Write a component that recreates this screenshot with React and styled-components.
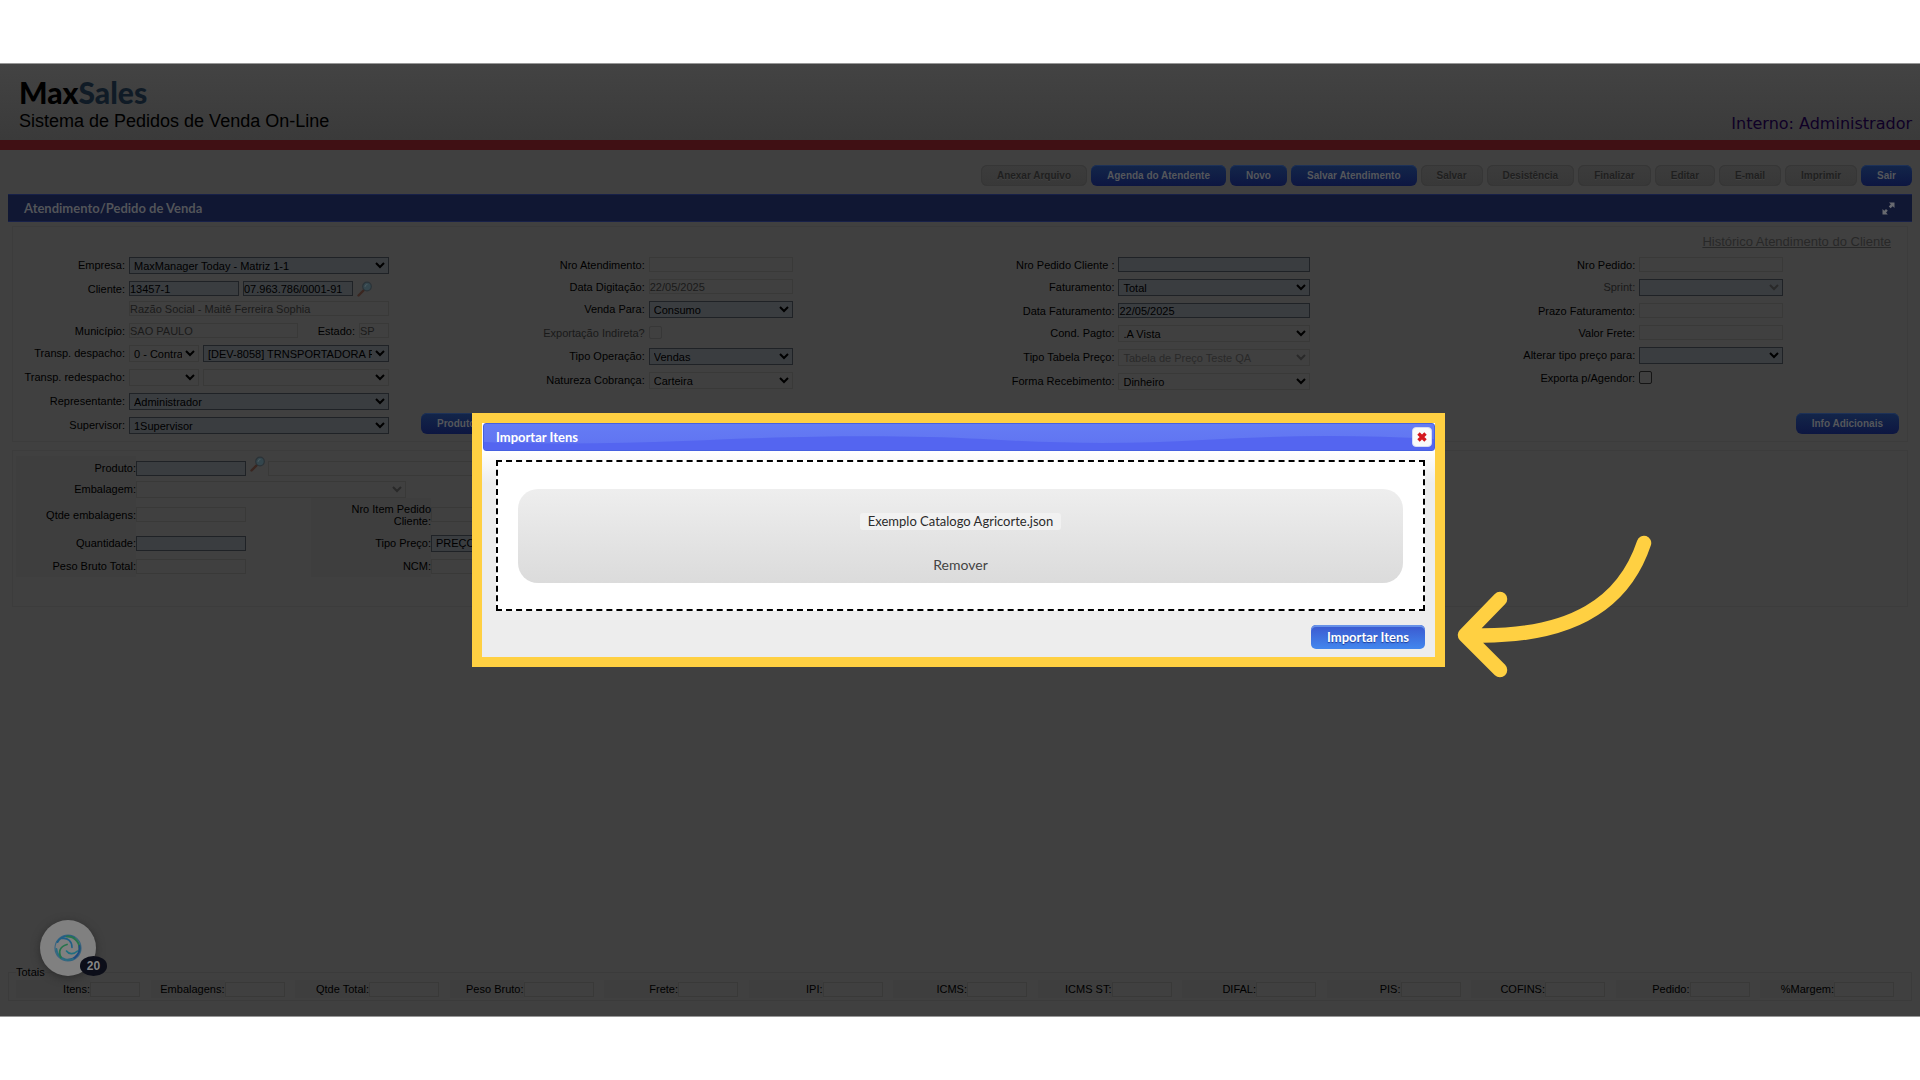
import React, { useId } from "react";
import styled, { createGlobalStyle, css } from "styled-components";

const ui = '"Liberation Sans", Arial, sans-serif';
const humanist = 'Lato, "Open Sans", sans-serif';

const GlobalStyle = createGlobalStyle`
  *, *::before, *::after { box-sizing: border-box; }
  body { margin: 0; background: #fff; font-family: ${ui}; font-size: 11px; color: #000; }
  button, input, select { font-family: inherit; margin: 0; }
`;

const Page = styled.div`
  min-height: 100vh;
  padding: 63px 0;
  display: flex;
  flex-direction: column;
`;

const Stage = styled.div`
  position: relative;
  flex: 1;
  display: flex;
  flex-direction: column;
  background: #404040;
  border: solid #979797;
  border-width: 1px 0;
`;

const Header = styled.header`
  display: flex;
  justify-content: space-between;
  align-items: flex-end;
  height: 86px;
  padding: 0 8px 7px 19px;
  background: linear-gradient(#434343, #3a3a3a);
  border-bottom: 10px solid #401014;
`;

const Brand = styled.h1`
  margin: 0;
  font: 900 30px/34px ${humanist};
  color: #000;
`;

const BrandAccent = styled.span`
  color: #101b26;
`;

const Tagline = styled.p`
  margin: 0;
  font-size: 18px;
  line-height: 24px;
`;

const User = styled.p`
  margin: 0;
  font: 16px/18px "DejaVu Sans", Verdana, sans-serif;
  color: #0f0026;
`;

const Toolbar = styled.nav`
  display: flex;
  justify-content: flex-end;
  gap: 4px;
  padding: 15px 8px 8px;
`;

const Button = styled.button`
  height: 21px;
  padding: 0 16px;
  border: 0;
  border-radius: 6px;
  font-size: 10px;
  font-weight: bold;
  white-space: nowrap;
  color: #55575b;
  background: linear-gradient(#13264a, #0d1641);
  box-shadow: inset 0 1px 0 #1d3157;
  &:disabled {
    color: #1f1f1f;
    background: linear-gradient(#3c3c3c, #383838);
    box-shadow: inset 0 0 0 1px #363636;
    text-shadow: 0 1px 0 #434343;
  }
`;

const TitleBar = styled.div`
  display: flex;
  justify-content: space-between;
  align-items: center;
  height: 28px;
  margin: 0 8px 4px;
  padding: 0 17px 0 16px;
  background: #101733;
  border: solid #172048;
  border-width: 1px 0;
  color: #525459;
`;

const Title = styled.h2`
  margin: 0;
  font: bold 13px/20px ${humanist};
`;

const Panel = styled.section`
  margin: 0 12px 8px;
  border: 1px solid #3c3c3c;
`;

const OrderPanel = styled(Panel)`
  height: 216px;
  display: flex;
  flex-direction: column;
`;

const HistoryLink = styled.a`
  align-self: flex-end;
  margin: 7px 16px;
  font-size: 13px;
  line-height: 16px;
  color: #282828;
`;

const Columns = styled.div`
  flex: 1;
  display: grid;
  grid-template-columns: 520fr 470fr 521fr 384fr;
`;

const Column = styled.div`
  min-width: 0;
`;

const Row = styled.div`
  display: flex;
  align-items: flex-start;
  gap: 4px;
  height: ${(p) => p.$step}px;
`;

const Label = styled.label`
  flex: none;
  display: flex;
  justify-content: flex-end;
  width: ${(p) => p.$width || 112}px;
  line-height: 16px;
  white-space: nowrap;
  color: ${(p) => (p.$muted ? "#191919" : "#000")};
`;

const look = css`
  flex: none;
  width: ${(p) => p.$width}px;
  font-size: 11px;
  border: 1px solid ${(p) => (p.$quiet ? "#393938" : "#1f2226")};
  border-radius: 0;
  background: ${(p) => (p.$quiet ? "#404040" : "#3a3d40")};
  color: #000;
  opacity: 1;
`;

const Input = styled.input`
  ${look}
  height: 15px;
  padding: 0;
  &:disabled { color: #1a1a1a; }
`;

const Select = styled.select`
  ${look}
  height: 17px;
  padding: 0;
  &:disabled { color: #292929; opacity: 1; }
`;

const Check = styled.input`
  appearance: none;
  width: 13px;
  height: 13px;
  margin: 1px 0;
  border: 1px solid ${(p) => (p.$quiet ? "#373737" : "#151515")};
  border-radius: 2px;
`;

const IconButton = styled.button`
  width: 16px;
  height: 16px;
  padding: 0;
  border: 0;
  background: none;
  svg { display: block; }
`;

const Actions = styled.div`
  display: flex;
  justify-content: space-between;
  margin: -28px 8px 7px 408px;
`;

const ItemPanel = styled(Panel)`
  height: 157px;
  padding: 5px 3px;
  display: flex;
  gap: 65px;
`;

const ItemColumn = styled.div`
  display: flex;
  flex-direction: column;
  width: ${(p) => p.$width}px;
`;

const ItemRow = styled.div`
  display: flex;
  align-items: center;
  height: ${(p) => p.$step}px;
`;

const ItemLabel = styled.label`
  flex: none;
  width: 120px;
  align-self: stretch;
  display: flex;
  align-items: center;
  justify-content: flex-end;
  text-align: right;
  line-height: 12px;
  background: #3e3e3e;
`;

const ItemIcon = styled(IconButton)`
  margin: 0 2px 0 4px;
  align-self: flex-start;
`;

const Totals = styled.fieldset`
  display: flex;
  justify-content: space-between;
  margin: auto 8px 15px;
  padding: 0 17px 2px 7px;
  border: 1px solid #3b3b3b;
`;

const Legend = styled.legend`
  padding: 0;
  line-height: 16px;
`;

const Total = styled.div`
  display: flex;
  align-items: center;
  height: 18px;
`;

const TotalLabel = styled.label`
  width: 74px;
  line-height: 18px;
  text-align: right;
  background: #3e3e3e;
  white-space: nowrap;
`;

const Bubble = styled.button`
  position: absolute;
  left: 40px;
  bottom: 40px;
  width: 56px;
  height: 56px;
  display: grid;
  place-items: center;
  padding: 0;
  border: 0;
  border-radius: 50%;
  background: #808080;
  box-shadow: 0 2px 8px #2c2c2c;
`;

const Badge = styled.span`
  position: absolute;
  right: -11px;
  bottom: 0;
  width: 27px;
  height: 20px;
  border-radius: 14px / 10px;
  background: #0c0e19;
  color: #858585;
  font: bold 12px/20px ${ui};
`;

const Layer = styled.div`
  position: absolute;
  inset: 0 3px 0 0;
  display: flex;
  justify-content: center;
  align-items: flex-start;
  padding-top: 349px;
`;

const Dialog = styled.div`
  position: relative;
  width: 973px;
  border: 10px solid #ffd042;
  background: linear-gradient(#fff 28px, #ededed 60px);
`;

const DialogBar = styled.div`
  position: relative;
  display: flex;
  align-items: center;
  justify-content: space-between;
  height: 28px;
  margin-left: 1px;
  padding: 0 2px 0 12px;
  overflow: hidden;
  border: 1px solid #4560e0;
  border-radius: 3px;
  background: linear-gradient(#657cf4, #5f72f1);
`;

const Wave = styled.svg`
  position: absolute;
  inset: 0;
  width: 100%;
  height: 100%;
`;

const DialogTitle = styled.h3`
  position: relative;
  margin: 0;
  font: bold 13px/16px ${humanist};
  color: #fff;
`;

const Close = styled.button`
  position: relative;
  width: 20px;
  height: 20px;
  display: grid;
  place-items: center;
  padding: 0;
  border: 1px solid #d5daf5;
  border-radius: 4px;
  background: #fafafa;
`;

const DialogBody = styled.div`
  padding: 9px 10px 8px 14px;
`;

const DropZone = styled.div`
  padding: 27px 20px 26px;
  border: 2px dashed #000;
  background: #fff;
`;

const FileCard = styled.div`
  height: 94px;
  display: flex;
  flex-direction: column;
  align-items: center;
  gap: 26px;
  padding-top: 24px;
  border-radius: 20px;
  background: linear-gradient(#eee, #dbdbdb);
  font: 13px/17px ${humanist};
  color: #2b2b2b;
`;

const FileName = styled.span`
  padding: 0 8px;
  border-radius: 3px;
  background: #f1f1f1;
`;

const Remove = styled.button`
  padding: 0;
  border: 0;
  background: none;
  font: 14px/17px ${humanist};
  color: #444;
`;

const DialogFoot = styled.div`
  display: flex;
  justify-content: flex-end;
  padding-top: 14px;
`;

const ImportButton = styled.button`
  height: 24px;
  padding: 0 16px;
  border: 0;
  border-radius: 5px;
  font: bold 13px/24px ${humanist};
  color: #fff;
  text-shadow: 0 1px 1px #1c3c98;
  background: linear-gradient(#3b58cf, #4287ee);
  box-shadow: inset 0 2px 0 #6791e8;
`;

const Arrow = styled.svg`
  position: absolute;
  left: calc(100% + 19px);
  top: 110px;
`;

function Magnifier() {
  return (
    <svg width="16" height="16" viewBox="0 0 16 16" fill="none">
      <path d="M1.5 14.5L7 9" stroke="#3a2620" strokeWidth="2.4" strokeLinecap="round" />
      <circle cx="10" cy="5.5" r="4.3" fill="#34464d" stroke="#2b3338" strokeWidth="1.2" />
      <path d="M8 5.5a2 2 0 0 1 2-2" stroke="#4c5a60" strokeLinecap="round" />
    </svg>
  );
}

function Field({ label, step, kind = "input", width, value = "", quiet, disabled, muted }) {
  const id = useId();
  return (
    <Row $step={step}>
      <Label htmlFor={id} $muted={muted}>{label}</Label>
      {kind === "select" && (
        <Select id={id} $width={width} $quiet={quiet} disabled={disabled}>
          <option>{value}</option>
        </Select>
      )}
      {kind === "check" && <Check type="checkbox" id={id} $quiet={quiet} disabled={disabled} />}
      {kind === "input" && (
        <Input id={id} $width={width} $quiet={quiet} disabled={disabled} defaultValue={value} />
      )}
    </Row>
  );
}

function ItemField({ label, step, kind = "input", width, value = "", quiet, disabled, children }) {
  const id = useId();
  return (
    <ItemRow $step={step}>
      <ItemLabel htmlFor={id}>{label}</ItemLabel>
      {kind === "select" ? (
        <Select id={id} $width={width} $quiet={quiet} disabled={disabled}>
          <option>{value}</option>
        </Select>
      ) : (
        <Input id={id} $width={width} $quiet={quiet} disabled={disabled} />
      )}
      {children}
    </ItemRow>
  );
}

const toolbar = [
  ["Anexar Arquivo", false],
  ["Agenda do Atendente", true],
  ["Novo", true],
  ["Salvar Atendimento", true],
  ["Salvar", false],
  ["Desistência", false],
  ["Finalizar", false],
  ["Editar", false],
  ["E-mail", false],
  ["Imprimir", false],
  ["Sair", true],
];

const totals = [
  ["Itens:", 50],
  ["Embalagens:", 60],
  ["Qtde Total:", 70],
  ["Peso Bruto:", 70],
  ["Frete:", 60],
  ["IPI:", 60],
  ["ICMS:", 60],
  ["ICMS ST:", 60],
  ["DIFAL:", 60],
  ["PIS:", 60],
  ["COFINS:", 60],
  ["Pedido:", 60],
  ["%Margem:", 60],
];

export default function App() {
  return (
    <Page>
      <GlobalStyle />
      <Stage>
        <Header>
          <div>
            <Brand>Max<BrandAccent>Sales</BrandAccent></Brand>
            <Tagline>Sistema de Pedidos de Venda On-Line</Tagline>
          </div>
          <User>Interno: Administrador</User>
        </Header>

        <Toolbar>
          {toolbar.map(([name, on]) => (
            <Button key={name} disabled={!on}>{name}</Button>
          ))}
        </Toolbar>

        <TitleBar>
          <Title>Atendimento/Pedido de Venda</Title>
          <svg width="13" height="13" viewBox="0 0 13 13" fill="#686a70">
            <path d="M7 0.5h5.5V6L10.7 4.2 8.6 6.2 6.8 4.4 8.8 2.3zM0.5 7L2.3 8.8 4 7 5.8 8.8 4.1 10.6 5.8 12.5H0.5z" />
          </svg>
        </TitleBar>

        <OrderPanel>
          <HistoryLink href="#historico">Histórico Atendimento do Cliente</HistoryLink>
          <Columns>
            <Column>
              <Field label="Empresa:" step={24} kind="select" width={260} value="MaxManager Today - Matriz 1-1" />
              <Row $step={20}>
                <Label htmlFor="cliente">Cliente:</Label>
                <Input id="cliente" $width={110} defaultValue="13457-1" />
                <Input aria-label="CNPJ" $width={110} defaultValue="07.963.786/0001-91" />
                <IconButton aria-label="Buscar cliente"><Magnifier /></IconButton>
              </Row>
              <Field label="" step={22} width={260} value="Razão Social - Maitê Ferreira Sophia" quiet disabled />
              <Row $step={22}>
                <Label htmlFor="municipio">Município:</Label>
                <Input id="municipio" $width={169} $quiet disabled defaultValue="SAO PAULO" />
                <Label htmlFor="estado" $width={53}>Estado:</Label>
                <Input id="estado" $width={30} $quiet disabled defaultValue="SP" />
              </Row>
              <Row $step={24}>
                <Label htmlFor="despacho">Transp. despacho:</Label>
                <Select id="despacho" $width={70} $quiet><option>0 - Contratação</option></Select>
                <Select aria-label="Transportadora" $width={186}><option>[DEV-8058] TRNSPORTADORA PADRAO</option></Select>
              </Row>
              <Row $step={24}>
                <Label htmlFor="redespacho">Transp. redespacho:</Label>
                <Select id="redespacho" $width={70} $quiet><option /></Select>
                <Select aria-label="Transportadora redespacho" $width={186} $quiet><option /></Select>
              </Row>
              <Field label="Representante:" step={24} kind="select" width={260} value="Administrador" />
              <Field label="Supervisor:" step={17} kind="select" width={260} value="1Supervisor" />
            </Column>
            <Column>
              <Field label="Nro Atendimento:" step={22} width={144} quiet disabled />
              <Field label="Data Digitação:" step={22} width={144} value="22/05/2025" quiet disabled />
              <Field label="Venda Para:" step={24} kind="select" width={144} value="Consumo" />
              <Field label="Exportação Indireta?" step={23} kind="check" quiet disabled muted />
              <Field label="Tipo Operação:" step={24} kind="select" width={144} value="Vendas" />
              <Field label="Natureza Cobrança:" step={17} kind="select" width={144} value="Carteira" quiet />
            </Column>
            <Column>
              <Field label="Nro Pedido Cliente :" step={22} width={192} />
              <Field label="Faturamento:" step={24} kind="select" width={192} value="Total" />
              <Field label="Data Faturamento:" step={22} width={192} value="22/05/2025" />
              <Field label="Cond. Pagto:" step={24} kind="select" width={192} value=".A Vista" quiet />
              <Field label="Tipo Tabela Preço:" step={24} kind="select" width={192} value="Tabela de Preço Teste QA" quiet disabled />
              <Field label="Forma Recebimento:" step={17} kind="select" width={192} value="Dinheiro" quiet />
            </Column>
            <Column>
              <Field label="Nro Pedido:" step={22} width={144} quiet disabled />
              <Field label="Sprint:" step={24} kind="select" width={144} disabled muted />
              <Field label="Prazo Faturamento:" step={22} width={144} quiet disabled />
              <Field label="Valor Frete:" step={22} width={144} quiet disabled />
              <Field label="Alterar tipo preço para:" step={23} kind="select" width={144} />
              <Field label="Exporta p/Agendor:" step={17} kind="check" />
            </Column>
          </Columns>
          <Actions>
            <Button>Produtos</Button>
            <Button>Info Adicionais</Button>
          </Actions>
        </OrderPanel>

        <ItemPanel>
          <ItemColumn $width={230}>
            <ItemField label="Produto:" step={24} width={110}>
              <ItemIcon aria-label="Buscar produto"><Magnifier /></ItemIcon>
              <Input aria-label="Descrição do produto" $width={260} $quiet disabled />
            </ItemField>
            <ItemField label="Embalagem:" step={18} kind="select" width={270} quiet disabled />
            <ItemField label="Qtde embalagens:" step={33} width={110} quiet disabled />
            <ItemField label="Quantidade:" step={24} width={110} />
            <ItemField label="Peso Bruto Total:" step={22} width={110} quiet disabled />
          </ItemColumn>
          <ItemColumn $width={230}>
            <ItemRow $step={42} />
            <ItemField label={<>Nro Item Pedido<br />Cliente:</>} step={33} width={110} quiet disabled />
            <ItemField label="Tipo Preço:" step={24} kind="select" width={110} value="PREÇO VENDA" />
            <ItemField label="NCM:" step={22} width={110} quiet disabled />
          </ItemColumn>
        </ItemPanel>

        <Totals>
          <Legend>Totais</Legend>
          {totals.map(([name, width]) => (
            <Total key={name}>
              <TotalLabel htmlFor={name}>{name}</TotalLabel>
              <Input id={name} $width={width} $quiet disabled />
            </Total>
          ))}
        </Totals>

        <Bubble aria-label="Abrir chat">
          <svg width="30" height="30" viewBox="0 0 30 30" fill="none" strokeLinecap="round">
            <circle cx="15" cy="15" r="13" stroke="#3a6480" strokeWidth="1.2" />
            <path d="M4.5 9A12 12 0 0 1 21 4.6" stroke="#1f5f86" strokeWidth="2" />
            <path d="M14 3.5A12 12 0 0 1 26 19" stroke="#26744c" strokeWidth="2" />
            <path d="M26.5 13A12 12 0 0 1 15 26.8" stroke="#1f4a80" strokeWidth="2" />
            <path d="M20 26A12 12 0 0 1 3.4 16" stroke="#2a6b80" strokeWidth="2" />
            <path d="M9 5.5c6-1 10 3 10 9" stroke="#1f5f86" strokeWidth="1.6" />
            <path d="M24.5 18c-4 4-9 3-11 0" stroke="#1f6f80" strokeWidth="1.6" />
            <path d="M8 24.5c-3-6-1-11 6-13" stroke="#26744c" strokeWidth="1.8" />
          </svg>
          <Badge>20</Badge>
        </Bubble>

        <Layer>
          <Dialog role="dialog" aria-label="Importar Itens">
            <DialogBar>
              <Wave viewBox="0 0 952 26" preserveAspectRatio="none">
                <path d="M0 18C60 20 130 20 200 17C330 11 420 11 500 15C580 20 650 20 720 16C800 11 880 11 952 15V26H0z" fill="#5465f0" />
              </Wave>
              <DialogTitle>Importar Itens</DialogTitle>
              <Close aria-label="Fechar">
                <svg width="10" height="10" viewBox="0 0 10 10">
                  <path d="M1.5 1.5L8.5 8.5M8.5 1.5L1.5 8.5" stroke="#d5161c" strokeWidth="3.4" />
                </svg>
              </Close>
            </DialogBar>
            <DialogBody>
              <DropZone>
                <FileCard>
                  <FileName>Exemplo Catalogo Agricorte.json</FileName>
                  <Remove>Remover</Remove>
                </FileCard>
              </DropZone>
              <DialogFoot>
                <ImportButton>Importar Itens</ImportButton>
              </DialogFoot>
            </DialogBody>
            <Arrow width="204" height="150" viewBox="0 0 204 150" fill="none" stroke="#ffd042" strokeWidth="14.5" strokeLinecap="round" strokeLinejoin="round">
              <path d="M190 10C171 67 122 107 11 102M46 66L11 102L46 137" />
            </Arrow>
          </Dialog>
        </Layer>
      </Stage>
    </Page>
  );
}
